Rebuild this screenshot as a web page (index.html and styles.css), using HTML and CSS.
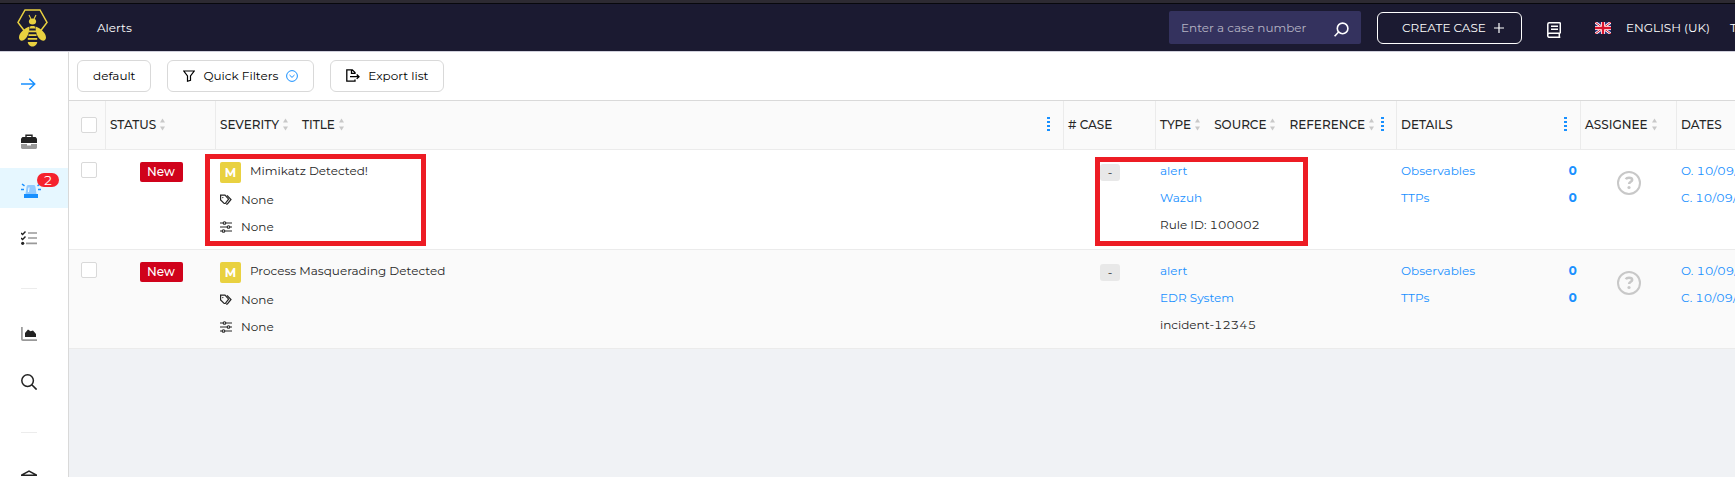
FILE: index.html
```html
<!DOCTYPE html>
<html lang="en">
<head>
<meta charset="utf-8">
<title>Alerts</title>
<link rel="stylesheet" href="styles.css">
</head>
<body>
<svg class="defs" aria-hidden="true">
  <symbol id="tags" viewBox="0 0 12 12"><path d="M.6 1.200h4.400l3.600 4-3.400 4.300H4.200L.6 6zM7 1.300l4 4.200-3.600 4.400-1.400.3" fill="none" stroke="currentColor" stroke-width="1.200"/><circle cx="2.800" cy="3.600" r=".7" fill="currentColor"/></symbol>
  <symbol id="sliders" viewBox="0 0 12 12"><g fill="none" stroke="currentColor" stroke-width="1.1"><path d="M0 2h3M6 2h6M0 6h7M10 6h2M0 10h2M5 10h7"/><circle cx="4.5" cy="2" r="1.3"/><circle cx="8.5" cy="6" r="1.3"/><circle cx="3.5" cy="10" r="1.3"/></g></symbol>
  <symbol id="sort" viewBox="0 0 5 13"><path d="M0 4.5L2.5.5 5 4.5zM0 8.5h5l-2.5 4z" fill="#c8c8c8"/></symbol>
  <symbol id="dots" viewBox="0 0 3 14"><path d="M0 0h3v2H0zM0 4h3v2H0zM0 8h3v2H0zM0 12h3v2H0z" fill="#1890ff"/></symbol>
  <symbol id="help" viewBox="0 0 24 24"><circle cx="12" cy="12" r="11" fill="none" stroke="currentColor" stroke-width="2"/><path d="M8.800 8.200c.5-1 1.700-1.500 3.200-1.500 1.900 0 3.200.8 3.200 2.200 0 1.900-3.100 1.900-3.100 4.100" fill="none" stroke="currentColor" stroke-width="2.500"/><circle cx="12" cy="16.500" r="1.600" fill="currentColor"/></symbol>
</svg>
<div class="chrome"></div>
<header class="top">
  <a class="logo" href="#" aria-label="Home">
    <svg width="31" height="38" viewBox="0 0 31 38"><path d="M11 22.500L7.500 22 1 13.500 8 1h15l7 12.500-6.500 8.500-3.500.5" fill="none" stroke="#e9d140" stroke-width="1.500"/><g fill="#e9d140"><ellipse cx="15.500" cy="12.500" rx="3.600" ry="3"/><path d="M12.500 17.500c-5 1.500-10.500 6.500-10.500 11 0 3 2.500 4 5 2.500 3.500-2 5.500-8 5.500-13.500zM18.500 17.500c5 1.500 10.500 6.500 10.500 11 0 3-2.500 4-5 2.500-3.500-2-5.500-8-5.500-13.500z"/><path d="M13.500 17h4l1 2.500h-6zM12 21.500h7v1.800h-7zM11.500 25.200h8V27h-8zM10.800 29h9.400v1.800h-9.400zM10.800 33h9.400c0 2.500-2.500 4.500-4.700 4.500s-4.700-2-4.700-4.500z"/></g><path d="M14 10l-2-4M17 10l2-4" stroke="#e9d140" stroke-width="1.100"/></svg>
  </a>
  <h1 class="page-name">Alerts</h1>
  <form class="case-search">
    <input type="text" aria-label="Case number" placeholder="Enter a case number">
    <button type="button" aria-label="Search"><svg width="15" height="15" viewBox="0 0 15 15"><path d="M4.600 10L.6 14.200" stroke="#fff" stroke-width="1.600"/><circle cx="8.600" cy="6.400" r="5.300" fill="none" stroke="#fff" stroke-width="1.600"/></svg></button>
  </form>
  <button class="create" type="button">CREATE CASE <svg width="10" height="10" viewBox="0 0 10 10"><path d="M0 5h10M5 0v10" stroke="#fff" stroke-width="1.200"/></svg></button>
  <a class="book" href="#" aria-label="Documentation"><svg width="14" height="16" viewBox="0 0 14 16"><path d="M13.300 11.300H2.200c-2 0-2 4 0 4h11.100M.8 13V2.300C.8 1.300 1.300.8 2.300.8h10.200c.5 0 .8.300.8.800v9.700M12.300 11.300v4M4 4.300h7M4 7.300h7" fill="none" stroke="#fff" stroke-width="1.500"/></svg></a>
  <a class="lang" href="#"><svg width="16" height="12" viewBox="0 0 16 12"><path d="M0 0h16v12H0z" fill="#29337a"/><path d="M0 0l16 12M16 0L0 12" stroke="#fff" stroke-width="2.600"/><path d="M0 0l16 12M16 0L0 12" stroke="#d8132c" stroke-width="1"/><path d="M8 0v12M0 6h16" stroke="#fff" stroke-width="4"/><path d="M8 0v12M0 6h16" stroke="#d8132c" stroke-width="2.400"/></svg><span>ENGLISH (UK)</span></a>
  <a class="org" href="#">T</a>
</header>
<div class="shell">
  <nav class="side">
    <a class="expand" href="#" aria-label="Expand"><svg width="15" height="12" viewBox="0 0 15 12"><path d="M0 6h13.500M8.300.8L13.700 6l-5.400 5.200" fill="none" stroke="#1890ff" stroke-width="1.500"/></svg></a>
    <a class="item" href="#" aria-label="Cases"><svg width="16" height="16" viewBox="0 0 16 16"><path d="M5 4V1.300h6V4" fill="none" stroke="#222" stroke-width="1.400"/><path d="M1.500 3h13L16 4.500V9H0V4.500z" fill="#222"/><path d="M0 10h6v1.500h4V10h6v4l-1 1H1l-1-1z" fill="#999"/></svg></a>
    <a class="item active" href="#" aria-label="Alerts, 2 new"><svg width="20" height="16" viewBox="0 0 20 16"><path d="M4.500 12l1-7c.2-1.500 1-2 2-2h5c1 0 1.800.5 2 2l1 7z" fill="#91caff"/><path d="M7.500 10L8 5.500" stroke="#fff"/><path d="M3 12h14v4H3z" fill="#1890ff"/><path d="M1 2l2.500 1.800M0 7.500h3M19 2l-2.500 1.800M20 7.500h-3" stroke="#1890ff" stroke-width="1.500"/></svg><span class="count">2</span></a>
    <a class="item" href="#" aria-label="Tasks"><svg width="16" height="14" viewBox="0 0 16 14"><path d="M0 2l1.600 1.500L4.500.5M0 7l1.600 1.500 2.900-3" fill="none" stroke="#222" stroke-width="1.400"/><circle cx="1.700" cy="12.300" r="1.600" fill="#222"/><path d="M7 2h9M7 7h9M5 12.300h11" stroke="#999" stroke-width="1.700"/></svg></a>
    <hr>
    <a class="item" href="#" aria-label="Dashboards"><svg width="16" height="14" viewBox="0 0 16 14"><path d="M.9 0v12.200c0 .6.300.9.900.9H16" fill="none" stroke="#999" stroke-width="1.700"/><path d="M4 10V6l3-3.500 2.500 1.800L12 3.500l3 3.500v3z" fill="#222"/></svg></a>
    <a class="item" href="#" aria-label="Search"><svg width="16" height="16" viewBox="0 0 16 16"><circle cx="6.600" cy="6.600" r="5.800" fill="none" stroke="#222" stroke-width="1.500"/><path d="M10.800 10.800l4.800 4.800" stroke="#222" stroke-width="1.600"/></svg></a>
    <hr>
    <a class="item" href="#" aria-label="Organisation"><svg width="16" height="16" viewBox="0 0 16 16"><path d="M.5 5.200L8 1l7.500 4.200zM2 14h12M3 8v5M8 8v5M13 8v5" fill="none" stroke="#222" stroke-width="1.500"/></svg></a>
  </nav>
  <main class="main">
    <div class="toolbar">
      <button type="button">default</button>
      <button type="button"><svg width="12" height="12" viewBox="0 0 12 12"><path d="M.8 1h10.400L7.500 6v4.300l-3 .9V6z" fill="none" stroke="#000" stroke-width="1.200"/></svg><span>Quick Filters</span><svg width="12" height="12" viewBox="0 0 12 12"><circle cx="6" cy="6" r="5.400" fill="none" stroke="#1890ff"/><path d="M3.500 5L6 7.400 8.500 5" fill="none" stroke="#1890ff"/></svg></button>
      <button type="button"><svg width="14" height="13" viewBox="0 0 14 13"><path d="M9 5V3.500L6.300.8H.8v11.400H9V10.500M5.500.8v3.500H9M4 7.700h9M10.700 5.500L13 7.700l-2.300 2.200" fill="none" stroke="#000" stroke-width="1.300"/></svg><span>Export list</span></button>
    </div>
    <table class="alerts">
      <colgroup><col class="c-check"><col class="c-status"><col><col class="c-case"><col class="c-type"><col class="c-details"><col class="c-assignee"><col class="c-dates"></colgroup>
      <thead>
        <tr>
          <th class="check"><input type="checkbox" aria-label="Select all"></th>
          <th><div class="heads"><span>STATUS<svg class="sort"><use href="#sort"/></svg></span></div></th>
          <th><div class="heads"><span>SEVERITY<svg class="sort"><use href="#sort"/></svg></span><span>TITLE<svg class="sort"><use href="#sort"/></svg></span><svg class="dots"><use href="#dots"/></svg></div></th>
          <th># CASE</th>
          <th><div class="heads"><span>TYPE<svg class="sort"><use href="#sort"/></svg></span><span>SOURCE<svg class="sort"><use href="#sort"/></svg></span><span>REFERENCE<svg class="sort"><use href="#sort"/></svg></span><svg class="dots"><use href="#dots"/></svg></div></th>
          <th><div class="heads"><span>DETAILS</span><svg class="dots"><use href="#dots"/></svg></div></th>
          <th><div class="heads"><span>ASSIGNEE<svg class="sort"><use href="#sort"/></svg></span></div></th>
          <th>DATES</th>
        </tr>
      </thead>
      <tbody>
        <tr>
          <td class="check"><input type="checkbox" aria-label="Select Mimikatz Detected!"></td>
          <td class="status"><span>New</span></td>
          <td class="title">
            <div class="name"><b>M</b>Mimikatz Detected!</div>
            <div class="meta"><svg><use href="#tags"/></svg>None</div>
            <div class="meta"><svg><use href="#sliders"/></svg>None</div>
            <div class="mark mark-title"></div>
          </td>
          <td class="case"><span>-</span></td>
          <td class="type"><a href="#">alert</a><a href="#">Wazuh</a><div>Rule ID: 100002</div><div class="mark mark-source"></div></td>
          <td class="details"><a href="#">Observables<b>0</b></a><a href="#">TTPs<b>0</b></a></td>
          <td class="assignee"><svg><use href="#help"/></svg></td>
          <td class="dates"><a href="#">O. 10/09/</a><a href="#">C. 10/09/</a></td>
        </tr>
        <tr>
          <td class="check"><input type="checkbox" aria-label="Select Process Masquerading Detected"></td>
          <td class="status"><span>New</span></td>
          <td class="title">
            <div class="name"><b>M</b>Process Masquerading Detected</div>
            <div class="meta"><svg><use href="#tags"/></svg>None</div>
            <div class="meta"><svg><use href="#sliders"/></svg>None</div>
          </td>
          <td class="case"><span>-</span></td>
          <td class="type"><a href="#">alert</a><a href="#">EDR System</a><div>incident-12345</div></td>
          <td class="details"><a href="#">Observables<b>0</b></a><a href="#">TTPs<b>0</b></a></td>
          <td class="assignee"><svg><use href="#help"/></svg></td>
          <td class="dates"><a href="#">O. 10/09/</a><a href="#">C. 10/09/</a></td>
        </tr>
      </tbody>
    </table>
  </main>
</div>
</body>
</html>
```

FILE: styles.css
```css
* { box-sizing: border-box; }
body {
  margin: 0;
  height: 100vh;
  display: flex;
  flex-direction: column;
  overflow: hidden;
  background: #f0f2f5;
  color: #262626;
  font-family: Montserrat, Inter, "Open Sans", sans-serif;
  font-size: 12px;
  font-variant-numeric: tabular-nums;
  line-height: 27px;
}
a { color: #1890ff; text-decoration: none; }
button, input { font: inherit; color: inherit; }
svg { flex: none; }
.defs { position: absolute; width: 0; height: 0; }

.chrome { flex: none; height: 4px; background: #2d2a32; border-bottom: 1px solid #08080c; }

.top {
  flex: none;
  display: flex;
  align-items: center;
  height: 48px;
  background: #1b1a31;
  border-bottom: 1px solid #d0d0dc;
  color: #fff;
  white-space: nowrap;
  overflow: hidden;
}
.top a { display: flex; align-items: center; color: #fff; }
.logo { margin-left: 17px; }
.page-name { margin: 0 auto 0 49px; padding-bottom: 1px; font-size: 12px; font-weight: 400; }
.case-search {
  display: flex;
  align-items: center;
  width: 192px;
  height: 33px;
  padding: 0 12px;
  background: #34325e;
  border-radius: 2px;
}
.case-search input {
  flex: 1;
  min-width: 0;
  padding: 0;
  border: 0;
  outline: 0;
  background: none;
}
.case-search input::placeholder { color: #b5b4c4; }
.case-search button { display: flex; padding: 4px 0 0; border: 0; background: none; }
.create {
  display: flex;
  align-items: center;
  justify-content: center;
  gap: 8px;
  width: 145px;
  height: 32px;
  margin-left: 16px;
  padding: 0 0 0 7px;
  border: 1px solid #fff;
  border-radius: 6px;
  background: none;
}
.book { margin: 4px 34px 0 25px; }
.lang { gap: 15px; width: 119px; }
.org { width: 21px; padding-left: 16px; }

.shell { flex: 1; min-height: 0; display: flex; }
.side {
  flex: none;
  width: 69px;
  background: #fff;
  border-right: 1px solid #d9d9d9;
  overflow: hidden;
}
.side a { display: flex; align-items: center; height: 40px; padding: 4px 0 0 21px; }
.side .expand { margin: 10px 0 18px; }
.item + .item { margin-top: 8px; }
.side .active { position: relative; background: #e6f7ff; }
.count {
  position: absolute;
  left: 37px;
  top: 5px;
  width: 22px;
  height: 14px;
  border-radius: 7px;
  background: #f5222d;
  color: #fff;
  font-size: 13px;
  line-height: 14px;
  text-align: center;
}
.side hr { width: 16px; height: 1px; margin: 32px 0 23px 21px; border: 0; background: #ececec; }

.main { flex: 1; min-width: 0; overflow: hidden; }
.toolbar {
  display: flex;
  gap: 16px;
  padding: 8px;
  background: #fff;
  border-bottom: 1px solid #d9d9d9;
}
.toolbar button {
  display: flex;
  align-items: center;
  gap: 8px;
  height: 32px;
  padding: 0 15px 1px;
  border: 1px solid #d9d9d9;
  border-radius: 6px;
  background: #fff;
  color: #000;
}

.alerts { width: 100%; table-layout: fixed; border-collapse: separate; border-spacing: 0; white-space: nowrap; }
.c-check { width: 37px; }
.c-status { width: 110px; }
.c-case { width: 92px; }
.c-type { width: 241px; }
.c-details { width: 184px; }
.c-assignee { width: 96px; }
.c-dates { width: 58px; }
th {
  height: 49px;
  padding: 0 4px 2px;
  background: #fafafa;
  border: 0 solid #ebebeb;
  border-width: 0 1px 1px 0;
  font-weight: 500;
  text-align: left;
}
th:last-child { border-right: 0; }
.heads { display: flex; align-items: center; gap: 7px; }
.heads span { display: flex; align-items: center; gap: 4px; }
.heads span + span { margin-left: 7px; }
.sort { width: 5px; height: 13px; }
.dots { width: 3px; height: 14px; margin: 0 9px 0 auto; }

td {
  height: 100px;
  padding: 7px 4px 9px;
  background: #fff;
  border-bottom: 1px solid #ebebeb;
  vertical-align: top;
}
tr:nth-child(even) td { background: #fafafa; height: 99px; }
td a { display: block; }
.check { padding: 0 0 0 12px; }
td.check { padding-top: 12px; }
.check input {
  display: block;
  appearance: none;
  width: 16px;
  height: 16px;
  margin: 0;
  border: 1px solid #d9d9d9;
  border-radius: 2px;
  background: #fff;
}
.status { padding-top: 12px; }
.status span {
  display: block;
  width: 43px;
  margin: 0 auto;
  border-radius: 2px;
  background: #d0021b;
  color: #fff;
  font-weight: 500;
  line-height: 20px;
  text-align: center;
}
.title, .type { position: relative; }
.title { padding-bottom: 6px; }
.name { display: flex; gap: 9px; height: 29px; }
.name b {
  width: 21px;
  height: 21px;
  margin-top: 5px;
  border-radius: 2px;
  background: #e9d140;
  color: #fff;
  line-height: 21px;
  text-align: center;
}
.meta { display: flex; align-items: center; gap: 9px; }
.meta svg { width: 12px; height: 12px; }
.case { padding-top: 14px; }
.case span {
  display: block;
  width: 20px;
  margin: 0 auto;
  border-radius: 3px;
  background: #e8e8e8;
  line-height: 17px;
  text-align: center;
}
.details a { display: flex; justify-content: space-between; }
.assignee { padding-top: 21px; }
.assignee svg { display: block; width: 24px; height: 24px; margin: 0 auto; color: #c8c8c8; }
.dates { padding-right: 0; overflow: hidden; }

/* Highlight frames laid over the first row */
.mark { position: absolute; border: 5px solid #ed1c24; pointer-events: none; }
.mark-title { left: -11px; top: 4px; width: 221px; height: 92px; }
.mark-source { left: -61px; top: 7px; width: 213px; height: 89px; }
```
